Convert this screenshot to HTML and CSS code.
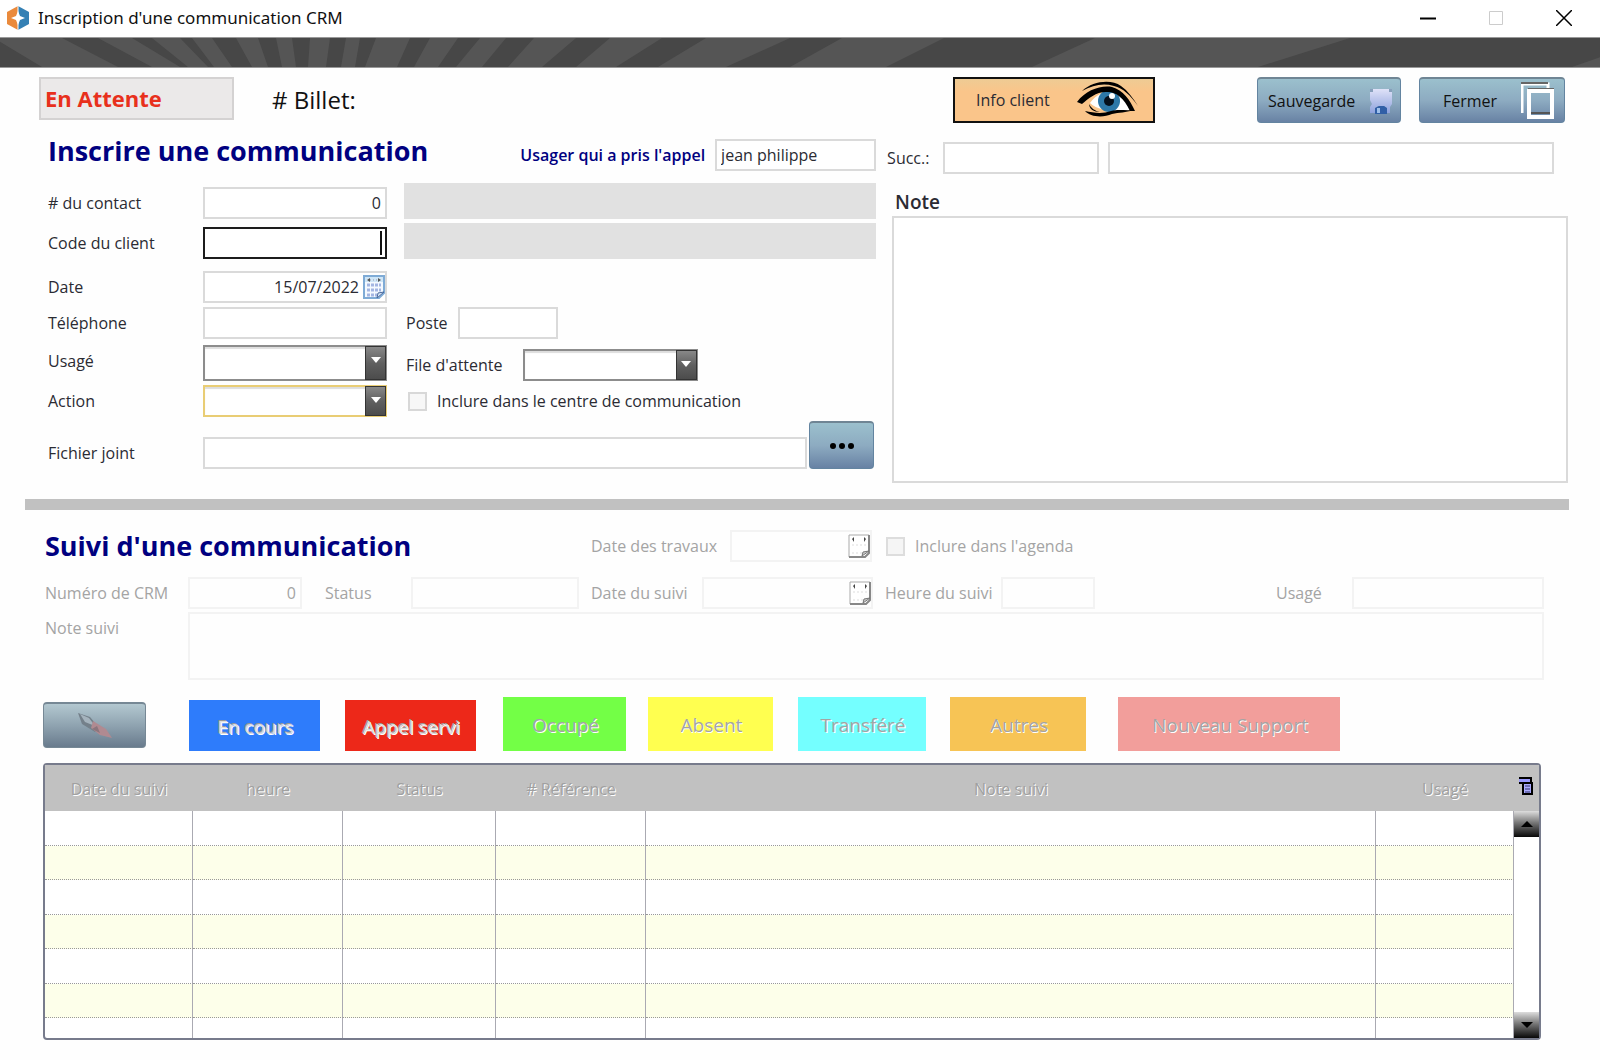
FILE: index.html
```html
<!DOCTYPE html>
<html lang="fr">
<head>
    <meta charset="UTF-8">
    <meta name="viewport" content="width=device-width, initial-scale=1.0">
    <title>Inscription d'une communication CRM</title>
    <link rel="stylesheet" href="styles.css">
</head>
<body>
    <!-- Calendar drawings used by the date fields -->
    <svg class="defs" width="0" height="0" aria-hidden="true">
        <symbol id="calendar" viewBox="0 0 22 24">
            <path d="M1 1h20v17l-5 5H1z" fill="#f4f9ff" stroke="#7fabd6" stroke-width="2"/>
            <path d="M2 2h18v5H2z" fill="#cfe6f7"/>
            <path d="M7 3v4L4 5zM15 3v4l3-2z" fill="#555"/>
            <path d="M7 5h8" stroke="#99a" stroke-dasharray="1 2"/>
            <path d="M4 10h14M4 15h14M4 20h10" stroke="#a3b5e2" stroke-width="3" stroke-dasharray="3 1"/>
            <path d="M14 23l1-5 6-1z" fill="#dbe8f8" stroke="#49699c"/>
        </symbol>
        <symbol id="calendar-off" viewBox="0 0 22 24">
            <path d="M1 1h20v18l-4 4H1z" fill="#fff" stroke="#aaa"/>
            <path d="M21 1v18l-4 4H1" fill="none" stroke="#888" stroke-width="2"/>
            <path d="M6 3v5L4 5zM16 3v5l2-3z" fill="#444"/>
            <path d="M4 11h14M4 19h10" stroke="#eee" stroke-width="2" stroke-dasharray="2 2"/>
            <path d="M14 22l1-4 6-1z" fill="#ccc" stroke="#777"/>
        </symbol>
    </svg>

    <header class="titlebar">
        <svg class="logo" viewBox="0 0 22 24" aria-hidden="true">
            <path d="M11 0v24L0 18V6z" fill="#ea8a3c"/>
            <path d="M11 0v24l11-6V6z" fill="#3480b4"/>
            <path d="M10 0h2v24h-2z" fill="#fff" opacity=".5"/>
            <path d="M11 5l2 5 5 2-5 2-2 5-2-5-5-2 5-2z" fill="#fff"/>
        </svg>
        <span class="title">Inscription d'une communication CRM</span>
        <button class="win-button" aria-label="Réduire"><svg viewBox="0 0 16 16"><path d="M0 8.500h16" stroke="#000" stroke-width="2"/></svg></button>
        <button class="win-button" aria-label="Agrandir" disabled><svg viewBox="0 0 16 16"><path d="M1.500 1.500h13v13h-13z" fill="none" stroke="#ccc"/></svg></button>
        <button class="win-button" aria-label="Quitter"><svg viewBox="0 0 16 16"><path d="M0 0l16 16M16 0L0 16" stroke="#000" stroke-width="1.500"/></svg></button>
    </header>

    <svg class="rays" viewBox="0 0 1600 30" preserveAspectRatio="none" aria-hidden="true">
        <path fill="#555" d="M0 4V0H62L118 30H42zM98 0h34l48 30h-28zM152 0h28l28 30h-20zM192 0h20l20 30h-18zM236 0h22l10 30h-16zM276 0h16l4 30h-14zM310 0h20l-4 30h-18zM346 0h14l-5 30h-14zM376 0h34l-13 30h-32zM430 0h28l-20 30h-24zM480 0h26l-24 30h-26zM534 0h42l-34 30h-34zM610 0h52l-46 30h-40zM706 0h84l-64 30h-68zM842 0h102l-58 30h-96zM1095 0h255l-92 30h-226zM1600 20v10h-28z"/>
    </svg>

    <main>
        <div class="toolbar">
            <output class="status">En Attente</output>
            <span class="ticket"># Billet:</span>
            <button class="button info">Info client
                <svg width="62" height="38" viewBox="0 0 62 38" aria-hidden="true">
                    <path d="M13 22C20 13 29 9 38 10c8 3 12 12 16 19-12 1-30 3-41-7z" fill="#fff"/>
                    <circle cx="32" cy="20" r="11" fill="#2d78a8"/>
                    <circle cx="32" cy="20" r="5" fill="#05101c"/>
                    <circle cx="35" cy="15" r="3" fill="#fff"/>
                    <path d="M0 21C9 9 24 4 35 6c11 3 18 13 23 24h-5C47 17 39 11 31 11 20 10 12 17 5 23z"/>
                    <path d="M5 10C16 0 34-2 44 5c7 5 12 12 17 20C53 14 46 7 37 5 26 2 16 4 5 10z"/>
                    <path d="M8 30c9 2 18 3 26 0 8-2 14 0 22-1-7 3-14 2-21 4-9 4-22 3-27-3z"/>
                    <path d="M12 23c2 4 6 7 11 8-6 0-11-3-11-8z"/>
                </svg>
            </button>
            <button class="button steel save">Sauvegarde
                <svg width="24" height="32" viewBox="0 0 24 32" aria-hidden="true">
                    <defs><linearGradient id="disk" x2="0" y2="1"><stop stop-color="#dfe2f8"/><stop offset="1" stop-color="#8ea2dc"/></linearGradient></defs>
                    <path d="M1 4h22v15l-2 3v6h-4v-5l-2-2H9l-3 3v4H1v-6l2-3-2-4z" fill="url(#disk)"/>
                    <path d="M1 4h3v3H1zM20 4h3v3h-3z" fill="#879fbb"/>
                    <path d="M6 23l4-2h5l3 2v6H6z" fill="#315fa6"/>
                    <path d="M8 23h3v5H8z" fill="#9fc0ea"/>
                </svg>
            </button>
            <button class="button steel close">Fermer
                <svg width="34" height="38" viewBox="0 0 34 38" aria-hidden="true">
                    <path d="M1 31V2h26v4" fill="none" stroke="#fff" stroke-width="3"/>
                    <path d="M0 1h27M7 7h26" stroke="#666" stroke-width="2"/>
                    <path d="M8 9h23v26H8z" fill="none" stroke="#fff" stroke-width="4"/>
                    <path d="M10 31h19" stroke="#555" stroke-width="2"/>
                </svg>
            </button>
        </div>

        <form class="entry">
            <div class="details">
                <div class="heading">
                    <h1>Inscrire une communication</h1>
                    <label class="taken-by" for="takenBy">Usager qui a pris l'appel</label>
                    <input id="takenBy" class="user" type="text" value="jean philippe">
                </div>
                <div class="row">
                    <label for="contact"># du contact</label>
                    <input id="contact" class="field right" type="text" value="0">
                    <output class="display" aria-label="Nom du contact"></output>
                </div>
                <div class="row">
                    <label for="client">Code du client</label>
                    <div class="field wrap">
                        <input id="client" class="active" type="text">
                        <span class="caret"></span>
                    </div>
                    <output class="display" aria-label="Nom du client"></output>
                </div>
                <div class="row date-row">
                    <label for="date">Date</label>
                    <div class="field wrap">
                        <input id="date" class="date" type="text" value="15/07/2022">
                        <svg class="calendar"><use href="#calendar"/></svg>
                    </div>
                </div>
                <div class="row">
                    <label for="phone">Téléphone</label>
                    <input id="phone" class="field" type="text">
                    <label class="second" for="ext">Poste</label>
                    <input id="ext" class="ext" type="text">
                </div>
                <div class="row select-row">
                    <label for="user">Usagé</label>
                    <div class="field wrap">
                        <select id="user" class="tall"><option></option></select>
                        <span class="arrow"></span>
                    </div>
                    <label class="second" for="queue">File d'attente</label>
                    <div class="wrap queue">
                        <select id="queue"><option></option></select>
                        <span class="arrow"></span>
                    </div>
                </div>
                <div class="row">
                    <label for="action">Action</label>
                    <div class="field wrap">
                        <select id="action" class="required"><option></option></select>
                        <span class="arrow"></span>
                    </div>
                    <label class="check"><input type="checkbox">Inclure dans le centre de communication</label>
                </div>
                <div class="row file-row">
                    <label for="file">Fichier joint</label>
                    <input id="file" class="file" type="text">
                    <button type="button" class="button steel browse" aria-label="Parcourir">
                        <svg width="24" height="8" viewBox="0 0 24 8" aria-hidden="true"><circle cx="3" cy="4" r="3"/><circle cx="12" cy="4" r="3"/><circle cx="21" cy="4" r="3"/></svg>
                    </button>
                </div>
            </div>

            <div class="notes">
                <div class="branch">
                    <label for="branch">Succ.:</label>
                    <input id="branch" class="branch-code" type="text">
                    <input class="branch-name" type="text" aria-label="Nom de la succursale">
                </div>
                <label class="note-label" for="note">Note</label>
                <textarea id="note"></textarea>
            </div>
        </form>

        <hr>

        <form class="followup">
            <div class="line">
                <h2>Suivi d'une communication</h2>
                <label class="work-label" for="workDate">Date des travaux</label>
                <div class="wrap work-date">
                    <input id="workDate" type="text" disabled>
                    <svg class="calendar"><use href="#calendar-off"/></svg>
                </div>
                <label class="check"><input type="checkbox" disabled>Inclure dans l'agenda</label>
            </div>
            <div class="line">
                <label class="first" for="number">Numéro de CRM</label>
                <input id="number" class="number right" type="text" value="0" disabled>
                <label class="state-label" for="state">Status</label>
                <input id="state" class="state" type="text" disabled>
                <label class="next-label" for="nextDate">Date du suivi</label>
                <div class="wrap next-date">
                    <input id="nextDate" type="text" disabled>
                    <svg class="calendar"><use href="#calendar-off"/></svg>
                </div>
                <label class="hour-label" for="hour">Heure du suivi</label>
                <input id="hour" class="hour" type="text" disabled>
                <label class="owner-label" for="owner">Usagé</label>
                <input id="owner" class="owner" type="text" disabled>
            </div>
            <div class="line note-line">
                <label class="first" for="nextNote">Note suivi</label>
                <textarea id="nextNote" disabled></textarea>
            </div>
        </form>

        <div class="actions">
            <button class="button steel edit" aria-label="Modifier" disabled>
                <svg width="38" height="32" viewBox="0 0 38 32" aria-hidden="true">
                    <path d="M2 3l12 4 10 12-5 3L6 14z" fill="#74808a"/>
                    <path d="M4 4l9 4 6 8-10-4z" fill="#a5b3bd"/>
                    <path d="M17 11l13 8 6 9-12-3-9-7z" fill="#b08a91"/>
                    <path d="M16 19l5-3 3 7z" fill="#8b757d"/>
                </svg>
            </button>
            <button class="state-button blue" disabled>En cours</button>
            <button class="state-button red" disabled>Appel servi</button>
            <button class="state-button green" disabled>Occupé</button>
            <button class="state-button yellow" disabled>Absent</button>
            <button class="state-button cyan" disabled>Transféré</button>
            <button class="state-button orange" disabled>Autres</button>
            <button class="state-button pink" disabled>Nouveau Support</button>
        </div>

        <div class="history">
            <table>
                <colgroup>
                    <col class="col-date"><col class="col-hour"><col class="col-state"><col class="col-ref"><col><col class="col-user">
                </colgroup>
                <thead>
                    <tr><th>Date du suivi</th><th>heure</th><th>Status</th><th># Référence</th><th>Note suivi</th><th>Usagé</th></tr>
                </thead>
                <tbody>
                    <tr><td></td><td></td><td></td><td></td><td></td><td></td></tr>
                    <tr><td></td><td></td><td></td><td></td><td></td><td></td></tr>
                    <tr><td></td><td></td><td></td><td></td><td></td><td></td></tr>
                    <tr><td></td><td></td><td></td><td></td><td></td><td></td></tr>
                    <tr><td></td><td></td><td></td><td></td><td></td><td></td></tr>
                    <tr><td></td><td></td><td></td><td></td><td></td><td></td></tr>
                    <tr class="cut"><td></td><td></td><td></td><td></td><td></td><td></td></tr>
                </tbody>
            </table>
            <div class="side">
                <button class="menu" aria-label="Menu du tableau">
                    <svg width="14" height="18" viewBox="0 0 14 18" aria-hidden="true">
                        <path d="M0 1h12v4H0z" fill="#99f"/>
                        <path d="M0 1h12v5M0 6h4" fill="none" stroke="#000" stroke-width="2"/>
                        <path d="M4 6h9v11H4z" fill="#aaf" stroke="#000" stroke-width="2"/>
                        <path d="M6 9h5M6 12h5M6 15h5" stroke="#336"/>
                    </svg>
                </button>
                <button class="scroll" aria-label="Monter"><svg width="12" height="6" viewBox="0 0 12 6"><path d="M0 6l6-6 6 6z"/></svg></button>
                <div class="track"></div>
                <button class="scroll" aria-label="Descendre"><svg width="12" height="6" viewBox="0 0 12 6"><path d="M0 0l6 6 6-6z"/></svg></button>
            </div>
        </div>
    </main>
</body>
</html>
```

FILE: styles.css
```css
* {
    box-sizing: border-box;
}
body {
    margin: 0;
    background: #fefefe;
    color: #2b2b33;
    font-family: "Trebuchet MS", "Open Sans", sans-serif;
    font-size: 16px;
    line-height: 32px;
}
input, select, textarea, button {
    font: inherit;
    color: inherit;
    margin: 0;
    border-radius: 0;
}
input, select, textarea {
    min-width: 0;
    border: 2px solid #dadada;
    background: #fff;
    outline: none;
}
input, select {
    height: 32px;
    padding: 0 4px;
}
textarea {
    display: block;
    resize: none;
}
svg {
    display: block;
}
.defs {
    position: absolute;
}

/* Window title */
.titlebar {
    display: flex;
    align-items: center;
    height: 37px;
    padding: 0 2px 2px 7px;
    background: #fff;
}
.logo {
    width: 22px;
    height: 24px;
}
.title {
    flex: 1;
    padding-left: 9px;
    color: #111;
    font-family: "Segoe UI", "Noto Sans", sans-serif;
    font-size: 17px;
}
.win-button {
    width: 68px;
    height: 34px;
    padding: 0 26px;
    border: 0;
    background: none;
}
.rays {
    width: 100%;
    height: 31px;
    background: #474747;
    border-top: 1px solid #999;
    border-bottom: 1px solid #999;
}

/* Top buttons */
.toolbar {
    display: flex;
    padding: 9px 35px 0 39px;
}
.status {
    width: 195px;
    height: 43px;
    padding: 0 4px;
    border: 2px solid #d4d2d2;
    background: #ebe9e9;
    color: #e8301c;
    font-size: 22px;
    font-weight: 700;
    line-height: 38px;
}
.ticket {
    flex: 1;
    padding-left: 38px;
    color: #111;
    font-size: 24px;
    line-height: 46px;
}
.button {
    display: flex;
    align-items: center;
    justify-content: space-between;
    height: 46px;
    padding: 0;
    line-height: 20px;
}
.info {
    width: 202px;
    margin-right: 102px;
    padding: 0 14px 0 21px;
    border: 2px solid #111;
    background: linear-gradient(#eecb94, #fac58a 30%);
}
.steel {
    border: 1px solid #6384a0;
    border-top: 2px solid #6f8594;
    border-radius: 4px;
    background: linear-gradient(#9bc0cd, #8dabc1 50%, #6882a4);
    color: #111;
}
.save {
    width: 144px;
    margin-right: 18px;
    padding: 0 7px 0 10px;
}
.close {
    width: 146px;
    padding: 0 9px 0 23px;
}

/* New communication */
.entry {
    display: grid;
    grid-template-columns: 45fr 37fr;
    gap: 11px;
    padding: 16px 32px 0 48px;
}
h1, h2 {
    margin: 0;
    color: #000080;
    font-size: 27px;
    font-weight: 700;
    line-height: 32px;
}
.heading, .branch, .line {
    display: flex;
    align-items: flex-end;
}
.heading {
    padding-bottom: 12px;
}
.heading h1 {
    align-self: flex-start;
    height: 32px;
    line-height: 24px;
}
.taken-by {
    margin-left: auto;
    margin-right: 10px;
    color: #000080;
    font-weight: 600;
}
.user {
    width: 161px;
}
.row {
    display: flex;
    align-items: flex-end;
    padding-bottom: 4px;
}
.row > label:first-child {
    width: 155px;
}
.field {
    width: 184px;
}
.right {
    text-align: right;
}
.display {
    flex: 1;
    height: 36px;
    margin-left: 17px;
    background: #e1e1e1;
}
.wrap {
    position: relative;
}
.wrap input, .wrap select {
    display: block;
    width: 100%;
}
.wrap .active {
    border-color: #1c1c1c;
}
.caret {
    position: absolute;
    top: 4px;
    right: 5px;
    width: 2px;
    height: 24px;
    background: #111;
}
.date-row {
    padding-top: 8px;
}
.wrap .date {
    padding-right: 26px;
    text-align: right;
}
.calendar {
    position: absolute;
    top: 4px;
    right: 2px;
    width: 22px;
    height: 24px;
}
select {
    appearance: none;
    border: 2px solid #8c8c8c;
    box-shadow: inset 0 2px 1px #ddd;
}
.select-row {
    padding-top: 2px;
}
.select-row > label:first-child {
    align-self: flex-start;
}
.tall {
    height: 36px;
}
.required {
    border-color: #e9cd74;
}
.arrow {
    position: absolute;
    top: 1px;
    right: 1px;
    bottom: 1px;
    width: 21px;
    border: 1px solid #333;
    background: linear-gradient(#888, #606060 50%, #4c4c4c);
    pointer-events: none;
}
.arrow::before {
    content: "";
    display: block;
    margin: 10px auto 0;
    width: 0;
    border: 5px solid transparent;
    border-top: 6px solid #fff;
    border-bottom: 0;
}
.second {
    margin-left: 19px;
}
.ext {
    width: 100px;
    margin-left: 10px;
}
.queue {
    width: 175px;
    margin-left: 20px;
}
.check {
    display: flex;
    align-items: center;
    gap: 10px;
    margin-left: 21px;
}
.check input {
    appearance: none;
    width: 19px;
    height: 19px;
    padding: 0;
    border-color: #d8d8d8;
    background: #f7f7f7;
}
.file-row {
    padding-bottom: 0;
}
.file {
    flex: 1;
}
.browse {
    width: 65px;
    height: 48px;
    margin: 0 2px;
    justify-content: center;
}
.notes {
    display: flex;
    flex-direction: column;
    padding-top: 3px;
    margin-bottom: -14px;
}
.branch {
    padding-right: 14px;
}
.branch label {
    width: 56px;
}
.branch-code {
    width: 156px;
    margin-right: 9px;
}
.branch-name {
    flex: 1;
}
.note-label {
    padding: 14px 0 0 8px;
    font-size: 19px;
    font-weight: 600;
    line-height: 28px;
}
.notes textarea {
    flex: 1;
    margin-left: 5px;
}
hr {
    height: 11px;
    margin: 30px 31px 0 25px;
    border: 0;
    background: #c1c1c1;
}

/* Follow-up, disabled until a communication is saved */
.followup {
    padding: 20px 56px 0 45px;
    color: #a4a4a4;
}
.followup h2 {
    flex: 0 0 546px;
}
.followup input, .followup textarea {
    border-color: #f3f3f3;
    background: #fefefe;
}
.followup .check input {
    border-color: #ddd;
    background: #f5f5f5;
}
.followup .check {
    margin-left: 14px;
}
.line + .line {
    padding-top: 15px;
}
.line + .note-line {
    align-items: flex-start;
    padding-top: 3px;
}
.work-label {
    width: 139px;
}
.work-date {
    width: 142px;
}
.first {
    width: 143px;
}
.number {
    width: 114px;
}
.state-label {
    width: 86px;
    margin-left: 23px;
}
.state {
    width: 168px;
}
.next-label {
    width: 111px;
    margin-left: 12px;
}
.next-date {
    width: 171px;
}
.hour-label {
    width: 116px;
    margin-left: 12px;
}
.hour {
    width: 94px;
}
.owner-label {
    width: 76px;
    margin-left: auto;
}
.owner {
    width: 192px;
}
.followup textarea {
    flex: 1;
    height: 68px;
}

/* Status buttons */
.actions {
    display: flex;
    align-items: flex-end;
    padding: 17px 0 12px 43px;
}
.edit {
    width: 103px;
    margin: 0 43px 3px 0;
    justify-content: center;
    border-color: #768895;
    background: linear-gradient(#b3c8d0, #8fa3b0 50%, #697b8d);
}
.state-button {
    height: 54px;
    padding: 2px 0 0 2px;
    border: 0;
    color: #a4a4a4;
    font-size: 19px;
    text-shadow: 1px 1px #fff;
}
.blue, .red {
    width: 131px;
    height: 51px;
    margin-right: 25px;
    color: #ddd;
    text-shadow: 1px 1px #fff, -1px -1px #999;
}
.blue { background: #2e7cfb; }
.red { background: #ed2819; margin-right: 27px; }
.green { width: 123px; margin-right: 22px; background: #73ff46; }
.yellow { width: 125px; margin-right: 25px; background: #ffff50; }
.cyan { width: 128px; margin-right: 24px; background: #74ffff; }
.orange { width: 136px; margin-right: 32px; background: #f7c455; }
.pink { width: 222px; background: #f29e9b; }

/* Follow-up list */
.history {
    display: flex;
    margin: 0 59px 20px 43px;
    border: 2px solid #777b8c;
    border-radius: 4px;
    background: #fff;
}
table {
    flex: 1;
    table-layout: fixed;
    border-collapse: separate;
    border-spacing: 0;
}
.col-date { width: 148px; }
.col-hour { width: 150px; }
.col-state { width: 153px; }
.col-ref { width: 150px; }
.col-user { width: 138px; }
th {
    height: 46px;
    padding: 2px 0 0;
    background: #c1c1c1;
    color: #a0a0a0;
    font-weight: 400;
    text-shadow: 1px 1px #fff;
}
td {
    height: 34px;
    padding: 0;
    border-right: 1px solid #aaaab2;
    border-bottom: 1px dotted #999;
}
tbody tr:nth-child(odd) td {
    height: 35px;
}
tbody tr:nth-child(even) {
    background: #fdffea;
}
tbody .cut:nth-child(odd) td {
    height: 20px;
    border-bottom: 0;
}
.side {
    display: flex;
    flex-direction: column;
    width: 25px;
}
.menu {
    height: 46px;
    padding: 0 0 4px 5px;
    border: 0;
    background: #c1c1c1;
}
.scroll {
    display: flex;
    align-items: center;
    justify-content: center;
    height: 26px;
    padding: 0;
    border: 0;
    background: linear-gradient(#ddd, #777 45%, #080808);
}
.track {
    flex: 1;
}
```
